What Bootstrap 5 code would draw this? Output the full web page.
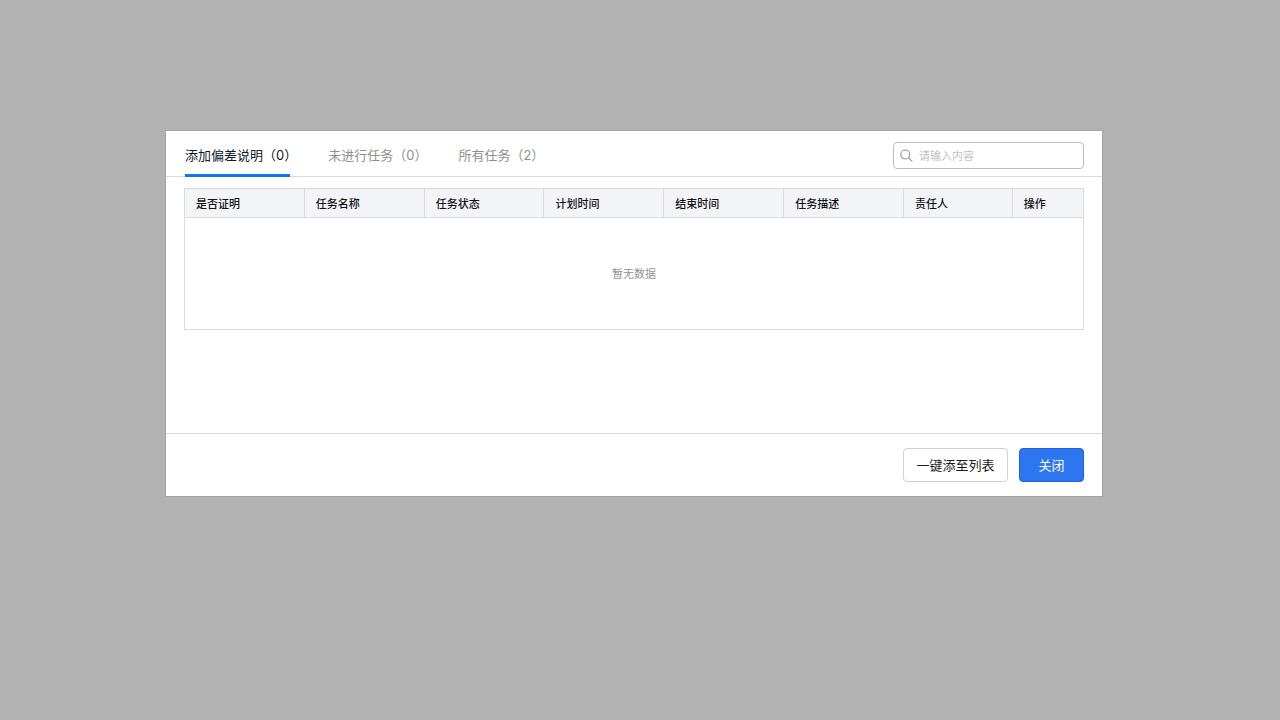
<!DOCTYPE html>
<html lang="zh-CN">
<head>
<meta charset="utf-8">
<meta name="viewport" content="width=device-width, initial-scale=1">
<title>添加偏差说明</title>
<link href="https://cdn.jsdelivr.net/npm/bootstrap@5.3.0/dist/css/bootstrap.min.css" rel="stylesheet">
<style>
body { background: #b2b2b2; color: #1c1c1e; font-family: Inter, "Noto Sans CJK SC", sans-serif; font-size: 13px; line-height: 20px; padding: 130px 177px 0 165px; }
.dialog-panel { border: 1px solid #a4a4a4; }
.panel-head { border-bottom: 1px solid #dcdcdc; padding: 0 18px 0 19px; }
.task-tabs { gap: 31px; }
.task-tabs .nav-link { position: relative; padding: 14px 0 11px; color: #8f8f8f; line-height: 20px; white-space: nowrap; }
.task-tabs .nav-link.active { color: #10182b; }
.task-tabs .nav-link.active::after { content: ""; position: absolute; left: 0; right: 7px; bottom: -1px; height: 3px; background: #0a78f5; }
.search-box { width: 191px; height: 27px; margin-top: 11px; border: 1px solid #bcbcbc; border-radius: 4px; padding: 0 6px; gap: 6px; }
.search-box input { font-size: 11px; line-height: 20px; padding: 0; min-width: 0; }
.search-box input::placeholder { color: #c2c2c2; }
.panel-main { padding: 11px 18px; min-height: 256px; }
.task-table { table-layout: fixed; font-size: 11px; border: 1px solid #dadada; line-height: 18px; }
.task-table th { background: #f3f4f7; color: #111; font-weight: 500; height: 29px; padding: 1px 11px 0; vertical-align: middle; border: 1px solid #dadada; }
.task-table td { color: #929292; height: 112px; text-align: center; vertical-align: middle; border: 0; padding: 0; }
.col-task { width: 13.33%; }
.col-owner { width: 12.1%; }
.panel-foot { border-top: 1px solid #d9dbdf; padding: 14px 18px; gap: 11px; }
.panel-foot .btn { height: 34px; font-size: 13px; line-height: 18px; padding: 0 12px 1px; border-radius: 4px; }
.panel-foot .btn-add { min-width: 105px; background: #fff; border-color: #d0d0d0; color: #1c1c1e; }
.panel-foot .btn-close-dialog { min-width: 65px; background: #2e76f0; border-color: #1b62e0; color: #fff; }
</style>
</head>
<body>
<main class="dialog-panel bg-white" role="dialog" aria-label="添加偏差说明">
  <header class="panel-head d-flex justify-content-between">
    <nav class="nav task-tabs flex-nowrap">
      <a class="nav-link active" aria-current="page" href="#">添加偏差说明（0）</a>
      <a class="nav-link" href="#">未进行任务（0）</a>
      <a class="nav-link" href="#">所有任务（2）</a>
    </nav>
    <label class="search-box d-flex align-items-center">
      <svg class="flex-shrink-0" width="13" height="13" viewBox="0 0 13 13" fill="none" stroke="#929292" stroke-width="1.1" stroke-linecap="round" aria-hidden="true"><circle cx="5.3" cy="5.5" r="4.5"/><path d="M8.6 8.8 12 12.1"/></svg>
      <input type="search" class="form-control border-0 shadow-none bg-transparent" placeholder="请输入内容" aria-label="搜索">
    </label>
  </header>
  <section class="panel-main">
    <table class="table task-table mb-0">
      <colgroup>
        <col class="col-task"><col class="col-task"><col class="col-task"><col class="col-task"><col class="col-task"><col class="col-task"><col class="col-owner"><col>
      </colgroup>
      <thead>
        <tr><th>是否证明</th><th>任务名称</th><th>任务状态</th><th>计划时间</th><th>结束时间</th><th>任务描述</th><th>责任人</th><th>操作</th></tr>
      </thead>
      <tbody><tr><td colspan="8">暂无数据</td></tr></tbody>
    </table>
  </section>
  <footer class="panel-foot d-flex justify-content-end">
    <button type="button" class="btn btn-add">一键添至列表</button>
    <button type="button" class="btn btn-close-dialog">关闭</button>
  </footer>
</main>
<script src="https://cdn.jsdelivr.net/npm/bootstrap@5.3.0/dist/js/bootstrap.bundle.min.js"></script>
</body>
</html>
